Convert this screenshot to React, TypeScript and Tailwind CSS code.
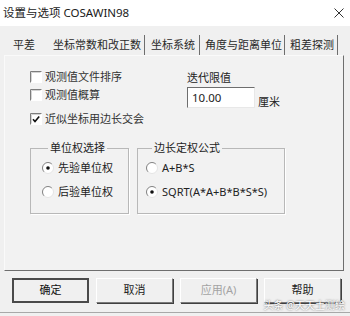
import React from "react";

const tabs = [
  { label: "平差", w: "w-[45px] pl-[8px]", active: true },
  { label: "坐标常数和改正数", w: "w-[95px] pl-[3px]" },
  { label: "坐标系统", w: "w-[55px] pl-[6px]" },
  { label: "角度与距离单位", w: "w-[85px] pl-[5px]" },
  { label: "粗差探测", w: "w-[53px] pl-[5px]" },
];

function CheckBox({ checked }: { checked?: boolean }) {
  return (
    <svg width="12" height="12" viewBox="0 0 12 12" className="shrink-0">
      <rect x="0" y="0" width="12" height="12" fill="#fff" />
      <path d="M0.5 11.5V0.5H11.5" stroke="#7d7d7d" fill="none" />
      <path d="M1.5 10.5V1.5H10.5" stroke="#d4d4d4" fill="none" />
      {checked && <path d="M3 6.2l2 2.3L9.2 3.4" stroke="#111" strokeWidth="1.6" fill="none" />}
    </svg>
  );
}

function Radio({ checked }: { checked?: boolean }) {
  return (
    <svg width="12" height="12" viewBox="0 0 12 12" className="shrink-0">
      <circle cx="6" cy="6" r="5.5" fill="#fff" />
      <path d="M9.89 2.11A5.5 5.5 0 0 0 2.11 9.89" stroke="#808080" fill="none" />
      <path d="M2.11 9.89A5.5 5.5 0 0 0 9.89 2.11" stroke="#e4e4e4" fill="none" />
      {checked && <circle cx="6" cy="6" r="1.8" fill="#111" />}
    </svg>
  );
}

function Check({ label, checked, className = "" }: { label: string; checked?: boolean; className?: string }) {
  return (
    <div className={`flex items-center gap-[3px] h-[18px] ${className}`}>
      <CheckBox checked={checked} />
      <span>{label}</span>
    </div>
  );
}

function Option({ label, checked, className = "" }: { label: string; checked?: boolean; className?: string }) {
  return (
    <div className={`flex items-center gap-[4px] h-[18px] ${className}`}>
      <Radio checked={checked} />
      <span>{label}</span>
    </div>
  );
}

function Group({ title, className, children }: { title: string; className: string; children: React.ReactNode }) {
  return (
    <fieldset className={`border border-[#b8b8b8] shadow-[1px_1px_0_#fff] h-[74px] pt-[3px] ${className}`}>
      <legend className="ml-[6px] px-[2px] leading-[16px]">{title}</legend>
      {children}
    </fieldset>
  );
}

const btn =
  "w-[77px] h-[25px] flex items-center justify-center bg-[#f0f0f0] border border-t-white border-l-white border-r-[#7a7a7a] border-b-[#7a7a7a] shadow-[1px_1px_0_#404040]";

export default function App() {
  return (
    <div className="relative w-[350px] h-[316px] overflow-hidden bg-[#f0f0f0] text-[11px] text-[#222] [font-family:'Noto_Sans','Noto_Sans_CJK_SC',sans-serif]">
      {/* title bar */}
      <div className="h-[26px] bg-white flex items-center justify-between pl-[3px] pr-[6px]">
        <span className="text-[11.5px] text-[#1a1a1a]">设置与选项 COSAWIN98</span>
        <svg width="10" height="10" viewBox="0 0 10 10">
          <path d="M0.5 0.5l9 9M9.5 0.5l-9 9" stroke="#333" strokeWidth="1" />
        </svg>
      </div>

      {/* tabs */}
      <div className="flex mt-[9px] h-[20px] pl-[5px]">
        {tabs.map((t) => (
          <div
            key={t.label}
            className={`${t.w} h-full flex items-center ${t.active ? "" : "border-r border-[#6e6e6e]"} text-[#2a2a2a]`}
          >
            {t.label}
          </div>
        ))}
      </div>

      {/* panel */}
      <div className="ml-[4px] w-[340px] h-[216px] bg-[#f2f2f2] border border-t-[#fafafa] border-l-[#fafafa] border-r-[#6e6e6e] border-b-[#6e6e6e] pt-[12px]">
        <div className="flex">
          <div className="w-[182px] pl-[25px] text-[#333]">
            <Check label="观测值文件排序" />
            <Check label="观测值概算" />
            <Check label="近似坐标用边长交会" checked className="mt-[6px]" />
          </div>
          <div className="pt-[2px]">
            <div className="leading-[16px]">迭代限值</div>
            <div className="flex items-end mt-[1px]">
              <div className="w-[68px] h-[21px] bg-white border border-t-[#6e6e6e] border-l-[#6e6e6e] border-r-[#e8e8e8] border-b-[#e8e8e8] flex items-center pl-[4px] text-[11.5px]">
                10.00
              </div>
              <span className="ml-[3px] mb-[-2px]">厘米</span>
            </div>
          </div>
        </div>

        <div className="flex gap-[8px] ml-[25px] mt-[12px]">
          <Group title="单位权选择" className="w-[99px] pl-[11px]">
            <Option label="先验单位权" checked />
            <Option label="后验单位权" className="mt-[6px]" />
          </Group>
          <Group title="边长定权公式" className="w-[148px] pl-[8px]">
            <Option label="A+B*S" />
            <Option label="SQRT(A*A+B*B*S*S)" checked className="mt-[6px]" />
          </Group>
        </div>
      </div>

      {/* buttons */}
      <div className="flex gap-[7px] mt-[7px] pl-[12px]">
        <button className="w-[77px] h-[25px] flex items-center justify-center bg-[#f0f0f0] border-2 border-[#4a4a4a] text-[#111]">
          确定
        </button>
        <button className={btn}>取消</button>
        <button className={`${btn} text-[#a3a3a3]`}>应用(A)</button>
        <button className={btn}>帮助</button>
      </div>

      <div className="absolute left-0 right-0 bottom-[3px] h-px bg-[#a8a8a8]" />

      {/* watermark */}
      <div className="absolute right-[5px] bottom-[6px] text-[10px] leading-none text-white [text-shadow:0_0_2px_#555]">
        头条 @天天土测绘
      </div>
    </div>
  );
}
